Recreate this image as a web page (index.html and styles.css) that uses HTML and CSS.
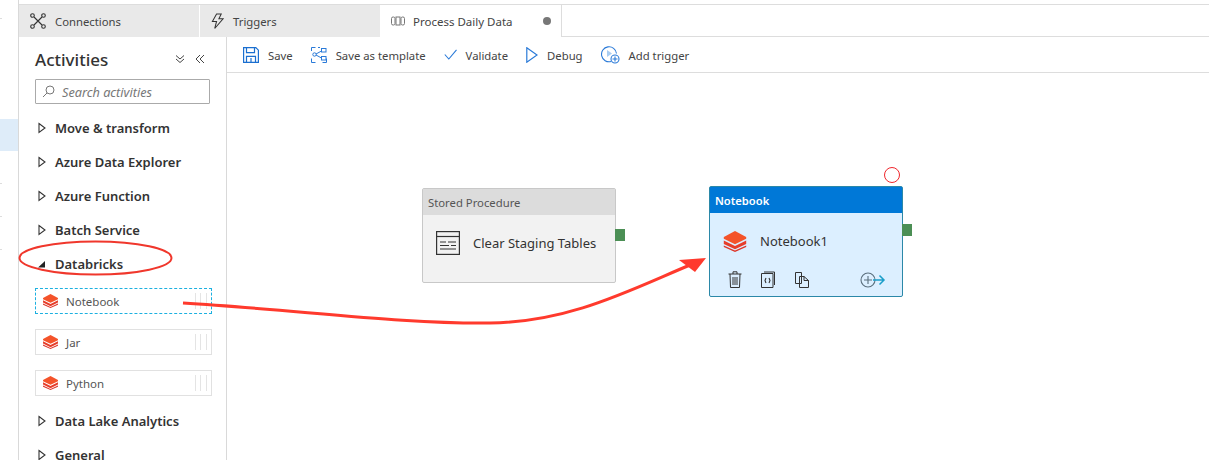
FILE: index.html
```html
<!DOCTYPE html>
<html lang="en">
<head>
    <meta charset="UTF-8">
    <title>Process Daily Data</title>
    <link rel="stylesheet" href="styles.css">
</head>

<body>
    <svg class="defs" width="0" height="0">
        <symbol id="bricks" viewBox="0 0 16 15">
            <path d="M8 0l8 4.200v1.400L8 9.500 0 5.600V4.200z" fill="#f4532a"/>
            <path d="M0 6.800l8 4 8-4v2.400l-8 3.800-8-3.800z" fill="#e63d2a"/>
            <path d="M0 10.300l8 3.600 8-3.600V11.500L8 15 0 11.500z" fill="#de3528"/>
        </symbol>
        <symbol id="closed" viewBox="0 0 10 12">
            <path d="M2 1.500L8 6l-6 4.500z" fill="none" stroke="#333" stroke-width="1.100"/>
        </symbol>
    </svg>

    <div id="wrap">
        <div id="rail">
            <div class="rail-tick tick-a"></div>
            <div class="rail-active"></div>
            <div class="rail-tick tick-b"></div>
            <div class="rail-tick tick-c"></div>
            <div class="rail-tick tick-d"></div>
        </div>

        <div id="main">
            <ul id="tabs">
                <li class="tab">
                    <svg width="16" height="16" viewBox="0 0 16 16" fill="none" stroke="#333" stroke-width="1.100">
                        <circle cx="2.500" cy="2.500" r="1.800"/><circle cx="13.500" cy="2.500" r="1.800"/>
                        <circle cx="2.500" cy="13.500" r="1.800"/><circle cx="13.500" cy="13.500" r="1.800"/>
                        <path d="M4 4l8 8M12 4l-8 8"/>
                    </svg>
                    <span>Connections</span>
                </li>
                <li class="tab">
                    <svg width="13" height="17" viewBox="0 0 14 17" fill="none" stroke="#333" stroke-width="1.100">
                        <path d="M6 .5h5L8.500 5.500H13L4 16l2-7.500H1.500z"/>
                    </svg>
                    <span>Triggers</span>
                </li>
                <li class="tab active">
                    <svg width="14" height="10" viewBox="0 0 14 10" fill="none" stroke="#777" stroke-width="1">
                        <rect x=".5" y="1" width="3.500" height="8" rx="1.500"/>
                        <rect x="5" y="1" width="4" height="8"/>
                        <rect x="10" y="1" width="3.500" height="8" rx="1.500"/>
                    </svg>
                    <span>Process Daily Data</span>
                    <i class="dirty"></i>
                </li>
            </ul>

            <div id="body">
                <div id="side">
                    <div class="side-head">
                        <h1>Activities</h1>
                        <svg class="collapse" width="10" height="10" viewBox="0 0 10 10" fill="none" stroke="#444" stroke-width="1">
                            <path d="M1 1.500l4 3.500 4-3.500M1 5l4 3.500L9 5"/>
                        </svg>
                        <svg class="hide" width="10" height="10" viewBox="0 0 10 10" fill="none" stroke="#444" stroke-width="1">
                            <path d="M5 1L1 5l4 4M9 1L5 5l4 4"/>
                        </svg>
                    </div>
                    <div class="search">
                        <svg width="13" height="13" viewBox="0 0 13 13" fill="none" stroke="#777" stroke-width="1">
                            <circle cx="8" cy="5" r="4"/><path d="M5 8l-4 4"/>
                        </svg>
                        <span>Search activities</span>
                    </div>

                    <div class="cat"><svg width="10" height="12"><use href="#closed"/></svg>Move &amp; transform</div>
                    <div class="cat"><svg width="10" height="12"><use href="#closed"/></svg>Azure Data Explorer</div>
                    <div class="cat"><svg width="10" height="12"><use href="#closed"/></svg>Azure Function</div>
                    <div class="cat"><svg width="10" height="12"><use href="#closed"/></svg>Batch Service</div>
                    <div class="cat"><svg width="10" height="12" viewBox="0 0 10 12"><path d="M1 9.500L8 3v6.500z" fill="#222"/></svg>Databricks</div>

                    <div class="item selected"><svg width="15" height="14"><use href="#bricks"/></svg><span>Notebook</span><i class="grip"></i></div>
                    <div class="item"><svg width="15" height="14"><use href="#bricks"/></svg><span>Jar</span><i class="grip"></i></div>
                    <div class="item"><svg width="15" height="14"><use href="#bricks"/></svg><span>Python</span><i class="grip"></i></div>

                    <div class="cat cat-after"><svg width="10" height="12"><use href="#closed"/></svg>Data Lake Analytics</div>
                    <div class="cat"><svg width="10" height="12"><use href="#closed"/></svg>General</div>
                </div>

                <div id="work">
                    <div id="toolbar">
                        <div class="tool">
                            <svg width="16" height="16" viewBox="0 0 16 16" fill="none" stroke="#1b6fd0" stroke-width="1.200">
                                <path d="M.6.6h12.200l2.600 2.600v12.200H.6z"/><path d="M3.500.6v5h8v-5M3.500 15.400v-6h9v6M8 11v4.400"/>
                            </svg>
                            <span>Save</span>
                        </div>
                        <div class="tool">
                            <svg width="16" height="16" viewBox="0 0 16 16" fill="none" stroke="#2a7ad8" stroke-width="1">
                                <path d="M.5 4V.5h4M.5 11.500v4h4M15.500 11.500v4h-4M7 .5h2"/>
                                <rect x="10.500" y="1.500" width="4.500" height="3.500"/><rect x="10.500" y="9.500" width="4.500" height="3.500"/>
                                <circle cx="3.500" cy="7.500" r="1.700"/><path d="M5 7l5.500-3M5 8l5.500 3"/>
                            </svg>
                            <span>Save as template</span>
                        </div>
                        <div class="tool">
                            <svg width="13" height="11" viewBox="0 0 13 11" fill="none" stroke="#2a7ad8" stroke-width="1.100">
                                <path d="M.8 5.500l4 4.500L12.500.8"/>
                            </svg>
                            <span>Validate</span>
                        </div>
                        <div class="tool">
                            <svg width="12" height="16" viewBox="0 0 12 16" fill="none" stroke="#2a7ad8" stroke-width="1.200">
                                <path d="M.8.8L11 8 .8 15.200z"/>
                            </svg>
                            <span>Debug</span>
                        </div>
                        <div class="tool">
                            <svg width="19" height="18" viewBox="0 0 19 18" fill="none" stroke="#2a7ad8" stroke-width="1.100">
                                <path d="M10 15.500A7.500 7.500 0 1 1 15.500 7.500"/>
                                <path d="M6 4l5 3.500L6 11z" fill="#a9cdf2" stroke="none"/>
                                <circle cx="14" cy="13" r="4" fill="#fff"/><path d="M14 10.500v5M11.500 13h5"/>
                            </svg>
                            <span>Add trigger</span>
                        </div>
                    </div>

                    <div id="canvas">
                        <div class="node node-sp">
                            <div class="node-title">Stored Procedure</div>
                            <div class="node-main">
                                <svg width="24" height="24" viewBox="0 0 24 24" fill="none" stroke="#333" stroke-width="1.200">
                                    <rect x=".6" y=".6" width="22.800" height="22.800"/><path d="M.6 5.500h22.800"/>
                                    <path d="M4 11h6M12 11h8M4 14.500h9M15 14.500h5M4 18h16" stroke-width="1"/>
                                </svg>
                                <span>Clear Staging Tables</span>
                            </div>
                            <i class="port"></i>
                        </div>

                        <div class="ring"></div>

                        <div class="node node-nb">
                            <div class="node-title">Notebook</div>
                            <div class="node-main">
                                <svg width="24" height="21"><use href="#bricks"/></svg>
                                <span>Notebook1</span>
                            </div>
                            <div class="node-actions">
                                <svg width="14" height="17" viewBox="0 0 14 17" fill="none" stroke="#333" stroke-width="1">
                                    <path d="M.5 3h13M5 3V.8h4V3M2 3l.5 13.500h9L12 3M5 6v8M7 6v8M9 6v8"/>
                                </svg>
                                <svg width="15" height="17" viewBox="0 0 15 17" fill="none" stroke="#333" stroke-width="1">
                                    <path d="M.5 2.500h11.500v14H.5zM3 1h10.500v13"/>
                                    <path d="M5 7L4 9.500 5 12M8 7l1 2.500L8 12" stroke-width="1.100"/>
                                </svg>
                                <svg width="14" height="16" viewBox="0 0 14 16" fill="none" stroke="#333" stroke-width="1">
                                    <path d="M.5.5h6v11h-6zM4.500 4.500H9l4.500 4v7h-9zM9 4.500v4h4.500"/>
                                </svg>
                                <svg class="act-next" width="26" height="16" viewBox="0 0 26 16" fill="none" stroke-width="1.100">
                                    <circle cx="8" cy="8" r="7" stroke="#5b6f7d"/><path d="M4 8h8M8 4v8" stroke="#5b6f7d"/>
                                    <path d="M13 8h11M19.500 3.500L24 8l-4.500 4.500" stroke="#1b9ec9" stroke-width="1.500"/>
                                </svg>
                            </div>
                            <i class="port"></i>
                        </div>
                    </div>
                </div>
            </div>
        </div>

        <!-- red annotations drawn on top of the screenshot -->
        <svg id="marks" width="1209" height="460" viewBox="0 0 1209 460" fill="none">
            <ellipse cx="95.500" cy="258" rx="76" ry="16.500" stroke="#f0372c" stroke-width="2"/>
            <path d="M183 303C300 310 400 324 490 323C570 322 630 290 690 265" stroke="#ff3a2d" stroke-width="3"/>
            <path d="M706 258L679 260 695 272z" fill="#ff3a2d"/>
        </svg>
    </div>
</body>

</html>
```

FILE: styles.css
```css
* {
    box-sizing: border-box;
}

html,
body {
    margin: 0;
    padding: 0;
    background: #fff;
}

.defs {
    position: absolute;
}

ul,
li {
    list-style: none;
    margin: 0;
    padding: 0;
}

#wrap {
    width: 1209px;
    height: 460px;
    overflow: hidden;
    position: relative;
    display: flex;
    font-family: "Noto Sans", "Open Sans", sans-serif;
    color: #333;
}

#rail {
    width: 19px;
    flex: none;
    border-right: 1px solid #d9d9d9;
    padding-top: 18px;
    display: flex;
    flex-direction: column;
}

.rail-tick {
    width: 2px;
    height: 1px;
    background: #ddd;
}

.rail-active {
    height: 32px;
    width: 18px;
    margin-top: 100px;
    background: #deecf9;
}

.tick-b,
.tick-c,
.tick-d {
    margin-top: 32px;
}

#main {
    flex: 1;
    display: flex;
    flex-direction: column;
    min-width: 0;
}

#tabs {
    height: 33px;
    margin-top: 4px;
    border-top: 1px solid #ddd;
    border-bottom: 1px solid #ddd;
    display: flex;
    flex: none;
}

.tab {
    width: 181px;
    height: 32px;
    background: #e9e9e9;
    border-right: 1px solid #fff;
    display: flex;
    align-items: center;
    padding-left: 11px;
    font-size: 11.300px;
    color: #444;
}

.tab span {
    margin-left: 9px;
}

.tab.active {
    background: #fff;
    border-right: 1px solid #ddd;
    padding-left: 10px;
    font-size: 11.500px;
}

.tab.active span {
    margin-left: 8px;
}

.dirty {
    width: 8px;
    height: 8px;
    border-radius: 50%;
    background: #777;
    margin-left: auto;
    margin-right: 10px;
}

#body {
    flex: 1;
    display: flex;
    min-height: 0;
}

#side {
    width: 208px;
    flex: none;
    border-right: 1px solid #d9d9d9;
    padding-left: 16px;
}

.side-head {
    height: 42px;
    display: flex;
    align-items: center;
    padding-top: 2px;
}

.side-head h1 {
    margin: 0;
    font-size: 17px;
    font-weight: 500;
    flex: 1;
}

.collapse {
    margin-right: 10px;
}

.hide {
    margin-right: 21px;
}

.search {
    width: 175px;
    height: 25px;
    border: 1px solid #aaa;
    border-radius: 1px;
    display: flex;
    align-items: center;
    padding-left: 6px;
    font-size: 12.700px;
    font-style: italic;
    color: #777;
}

.search span {
    margin-left: 7px;
}

.cat {
    height: 34px;
    display: flex;
    align-items: center;
    font-size: 13px;
    font-weight: 600;
    color: #333;
}

.cat svg {
    margin-left: 2px;
    margin-right: 8px;
    flex: none;
}

.search + .cat {
    margin-top: 7px;
}

.item {
    width: 177px;
    height: 26px;
    margin-bottom: 15px;
    border: 1px solid #e1e1e1;
    display: flex;
    align-items: center;
    padding-left: 7px;
    font-size: 11.500px;
    color: #555;
    position: relative;
}

.cat + .item {
    margin-top: 7px;
}

.item span {
    margin-left: 8px;
}

.item.selected {
    border: 1px dashed #1cb0e0;
}

.grip {
    position: absolute;
    right: 4px;
    top: 4px;
    width: 12px;
    height: 16px;
    border-left: 1px solid #e4e4e4;
    border-right: 1px solid #e4e4e4;
}

.grip::after {
    content: "";
    display: block;
    width: 1px;
    height: 16px;
    margin-left: 4px;
    background: #e4e4e4;
}

.cat-after {
    margin-top: -7px;
}

#work {
    flex: 1;
    min-width: 0;
    display: flex;
    flex-direction: column;
}

#toolbar {
    height: 36px;
    flex: none;
    border-bottom: 1px solid #ddd;
    display: flex;
    align-items: center;
    padding-left: 16px;
    gap: 18px;
    font-size: 11.300px;
    color: #444;
}

.tool {
    display: flex;
    align-items: center;
    gap: 9px;
}

.tool span {
    margin-top: 2px;
}

#canvas {
    flex: 1;
    position: relative;
}

.node {
    position: absolute;
    border-radius: 2px;
}

.node-sp {
    left: 195px;
    top: 115px;
    width: 194px;
    height: 95px;
    border: 1px solid #c8c8c8;
    background: #f2f2f2;
}

.node-sp .node-title {
    height: 26px;
    background: #dcdcdc;
    color: #555;
    font-size: 11.300px;
    line-height: 28px;
    padding-left: 5px;
}

.node-main {
    display: flex;
    align-items: center;
    gap: 13px;
    font-size: 13px;
    color: #333;
}

.node-sp .node-main {
    height: 55px;
    padding-left: 13px;
}

.node-nb {
    left: 482px;
    top: 113px;
    width: 194px;
    height: 111px;
    border: 1px solid #2b88a8;
    background: #dcefff;
}

.node-nb .node-title {
    height: 26px;
    background: #0078d7;
    color: #fff;
    font-size: 11.200px;
    font-weight: 600;
    line-height: 28px;
    padding-left: 5px;
}

.node-nb .node-main {
    height: 56px;
    padding-left: 13px;
}

.node-actions {
    display: flex;
    align-items: center;
    margin-top: 2px;
    padding-left: 18px;
    gap: 19px;
}

.act-next {
    margin-left: 32px;
}

.port {
    position: absolute;
    left: 100%;
    width: 10px;
    height: 12px;
    background: #4b8f55;
}

.node-sp .port {
    top: 40px;
}

.node-nb .port {
    top: 37px;
}

.ring {
    position: absolute;
    left: 657px;
    top: 94px;
    width: 16px;
    height: 16px;
    border: 1px solid #f0262c;
    border-radius: 50%;
}

#marks {
    position: absolute;
    left: 0;
    top: 0;
    pointer-events: none;
}
```
